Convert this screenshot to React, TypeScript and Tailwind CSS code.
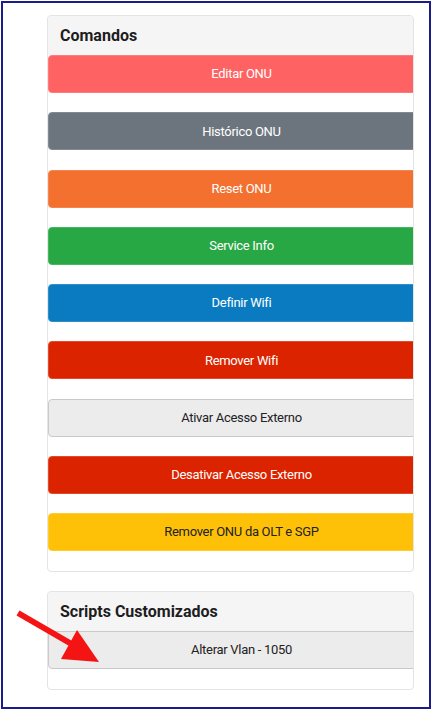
const comandos = [
  { label: "Editar ONU", cls: "bg-[#ff6262] border-[#ff7b7b] text-white" },
  { label: "Histórico ONU", cls: "bg-[#6c757d] border-[#838b92] text-white" },
  { label: "Reset ONU", cls: "bg-[#f3702f] border-[#f5854e] text-white" },
  { label: "Service Info", cls: "bg-[#28a745] border-[#48b55f] text-white" },
  { label: "Definir Wifi", cls: "bg-[#0a7bc0] border-[#2f8fca] text-white" },
  { label: "Remover Wifi", cls: "bg-[#dc2300] border-[#e24a2c] text-white" },
  { label: "Ativar Acesso Externo", cls: "bg-[#ececec] border-[#c9c9c9] text-[#222]" },
  { label: "Desativar Acesso Externo", cls: "bg-[#dc2300] border-[#e24a2c] text-white" },
  { label: "Remover ONU da OLT e SGP", cls: "bg-[#ffc107] border-[#ffcb2e] text-[#222]" },
];

function Btn({ label, cls }: { label: string; cls: string }) {
  return (
    <button
      className={`flex h-[38px] w-[387px] shrink-0 items-center justify-center rounded-[4px] border text-[13px] tracking-[-0.3px] ${cls}`}
    >
      {label}
    </button>
  );
}

function CardHeader({ title }: { title: string }) {
  return (
    <div className="flex h-[39px] items-center bg-[#f5f5f5] px-[12px] text-[16px] font-bold text-[#1d1d1d]">
      {title}
    </div>
  );
}

export default function App() {
  return (
    <div className="relative h-[710px] w-[433px] bg-white p-px" style={{ fontFamily: "Roboto, 'Liberation Sans', sans-serif" }}>
      <div className="h-[708px] w-[430px] border-2 border-[#1b1b8a] pl-[44px] pt-[12px]">
        <div className="w-[367px] overflow-hidden rounded-[4px] border border-[#e4e4e4] pb-[20px]">
          <CardHeader title="Comandos" />
          <div className="flex flex-col gap-[19.25px]">
            {comandos.map((c) => (
              <Btn key={c.label} {...c} />
            ))}
          </div>
        </div>

        <div className="mt-[19px] w-[367px] overflow-hidden rounded-[4px] border border-[#e4e4e4] pb-[20px]">
          <CardHeader title="Scripts Customizados" />
          <Btn label="Alterar Vlan - 1050" cls="bg-[#ececec] border-[#c9c9c9] text-[#222]" />
        </div>
      </div>

      {/* red arrow annotation */}
      <svg className="pointer-events-none absolute left-0 top-0" width="433" height="710">
        <line x1="18" y1="613" x2="75" y2="646" stroke="#f41414" strokeWidth="6" />
        <polygon points="77,630 61,659 99,662" fill="#f41414" />
      </svg>
    </div>
  );
}
